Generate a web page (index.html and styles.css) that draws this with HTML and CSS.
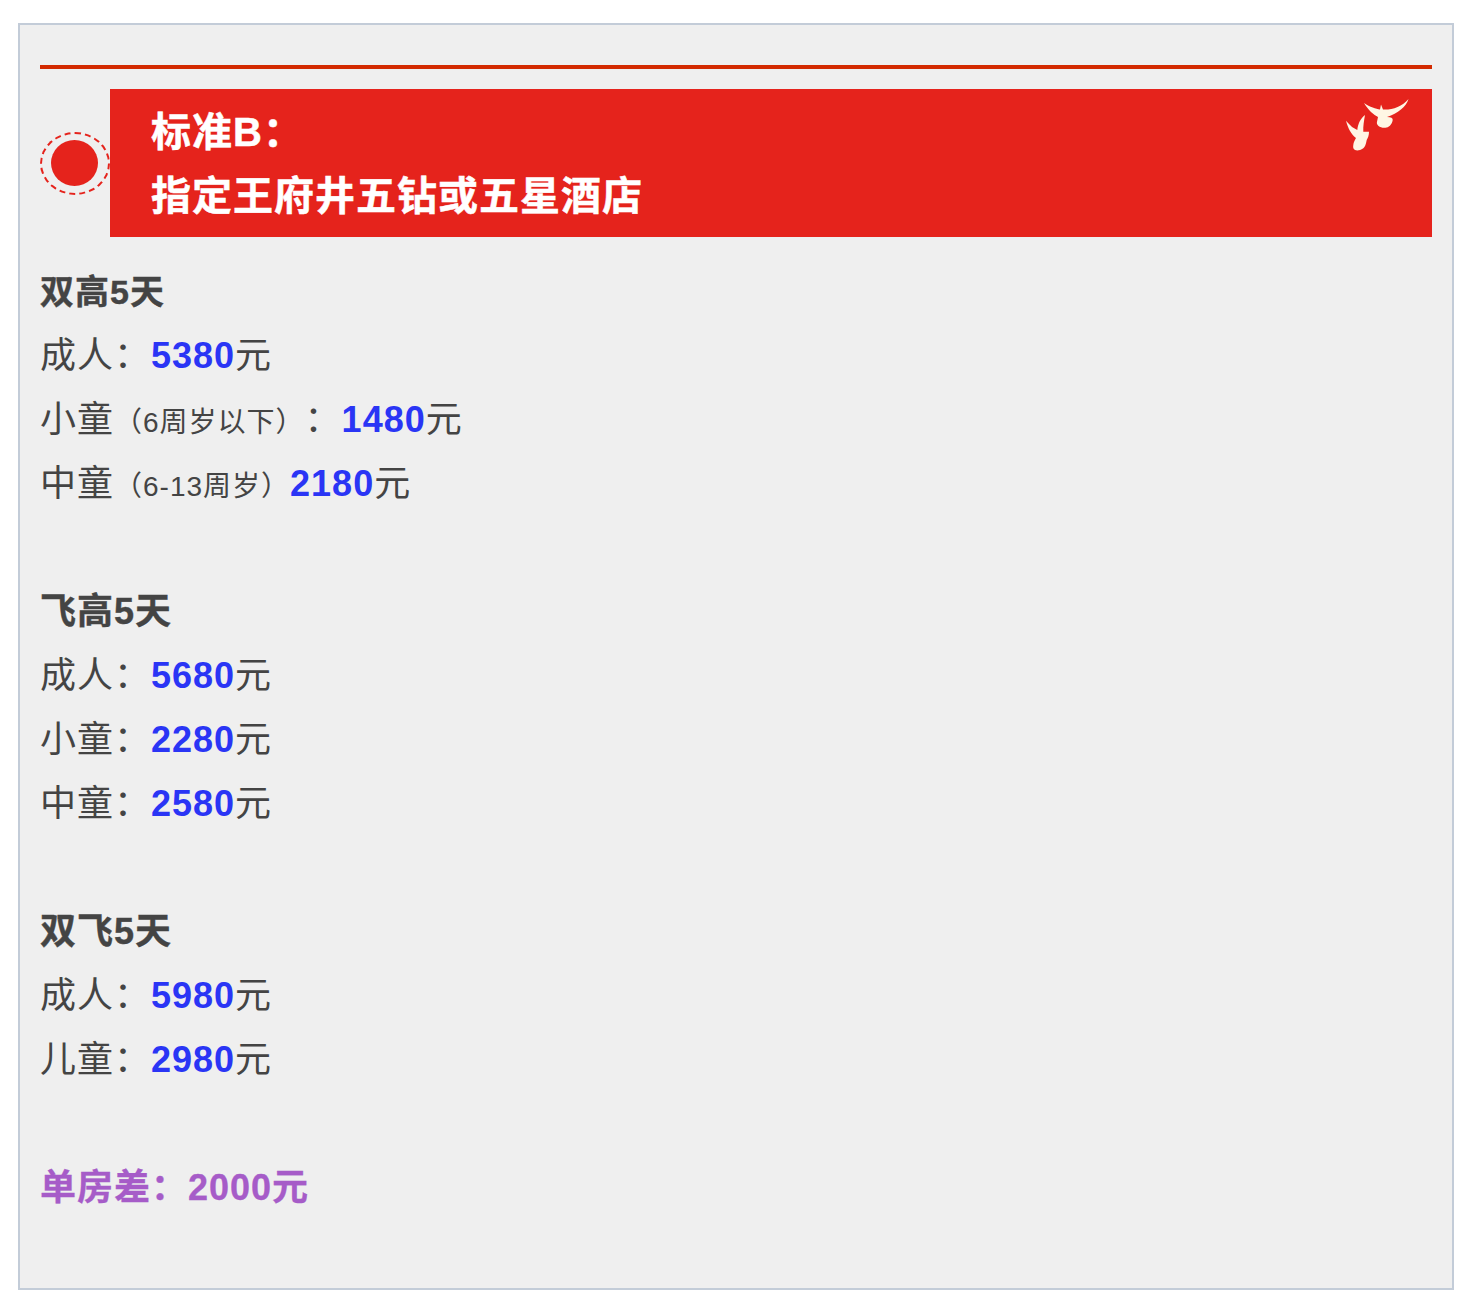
FILE: index.html
```html
<!DOCTYPE html>
<html lang="zh">
<head>
<meta charset="utf-8">
<title>标准B</title>
<link rel="stylesheet" href="styles.css">
</head>
<body>
<main class="card">
  <div class="rule"></div>
  <header class="head">
    <div class="dot"><div class="dot-core"></div></div>
    <div class="banner">
      <div class="banner-text">标准B：<br>指定王府井五钻或五星酒店</div>
      <svg class="birds" viewBox="0 0 72 60" aria-hidden="true">
        <path class="bird" d="M24 8 C30 12 36 14 40 14.5 L41 9.5 L43 14.5 C52 15 62 12 68.5 4 C66 12 58 18 47 22 C51 22 53 23 52.7 25 C52 30 48 33 45 32.7 C40 33 36 30 37 26.7 L38 22 C34 20 28 15 24 8 Z"/>
        <path class="bird" d="M6 25.7 C9 29 11 31 12 32 L17.3 35 C18 29 20 24 25 20 C24 26 23 31 23.3 36.7 L29 36.7 C29 40 28 43 26.7 45 C26 49 25 52 23.3 53.3 C20 55.5 17 56 15 55 C13 54 13 52 13.3 50 C13.5 47 15 45 16 43 C11 39 8 33 6 25.7 Z"/>
      </svg>
    </div>
  </header>
  <section class="list">
    <p class="row title-s">双高5天</p>
    <p class="row">成人：<b class="price">5380</b>元</p>
    <p class="row">小童<span class="note">（6周岁以下）</span>：<b class="price">1480</b>元</p>
    <p class="row">中童<span class="note">（6-13周岁）</span><b class="price">2180</b>元</p>
    <p class="row"></p>
    <p class="row title">飞高5天</p>
    <p class="row">成人：<b class="price">5680</b>元</p>
    <p class="row">小童：<b class="price">2280</b>元</p>
    <p class="row">中童：<b class="price">2580</b>元</p>
    <p class="row"></p>
    <p class="row title">双飞5天</p>
    <p class="row">成人：<b class="price">5980</b>元</p>
    <p class="row">儿童：<b class="price">2980</b>元</p>
    <p class="row"></p>
    <p class="row extra">单房差：2000元</p>
  </section>
</main>
</body>
</html>
```
FILE: styles.css
```css
* { box-sizing: border-box; }
html, body { margin: 0; background: #fff; }
body {
  padding: 23px 14px 16px 18px;
  font-family: "Liberation Sans", "Noto Sans CJK SC", sans-serif;
  color: #444;
  text-spacing-trim: space-all;
}
.card {
  height: 1267px;
  border: 2px solid #c3ccd8;
  background: #efefef;
  padding: 40px 20px 0;
}
.rule { height: 4px; background: #d32a00; }
.head { display: flex; align-items: center; margin-top: 20px; }
.dot {
  width: 70px;
  height: 63px;
  flex: none;
  border: 2px dashed #e5231c;
  border-radius: 50%;
  display: flex;
  align-items: center;
  justify-content: center;
}
.dot-core { width: 47px; height: 46px; margin-right: 2px; border-radius: 50%; background: #e5231c; }
.banner {
  flex: 1;
  height: 148px;
  background: #e5231c;
  padding: 11px 41px 0;
  display: flex;
  justify-content: space-between;
  align-items: flex-start;
}
.banner-text {
  color: #fff;
  font-size: 40px;
  font-weight: 700;
  line-height: 64px;
  letter-spacing: 1px;
  -webkit-text-stroke: .5px #fff;
}
.birds { width: 72px; height: 60px; flex: none; margin: -5px -21px 0 0; filter: blur(.5px); }
.bird { fill: #fff6e4; }
.list { margin-top: 23px; }
.row {
  margin: 0;
  height: 64px;
  line-height: 64px;
  font-size: 36px;
  letter-spacing: 1px;
  white-space: nowrap;
}
.title { font-weight: 700; -webkit-text-stroke: .4px #444; }
.title-s { font-weight: 700; font-size: 34px; -webkit-text-stroke: .4px #444; }
.price { color: #2a35f5; }
.note { font-size: 28px; }
.extra { color: #a65cc8; font-weight: 700; -webkit-text-stroke: .3px #a65cc8; }
```
